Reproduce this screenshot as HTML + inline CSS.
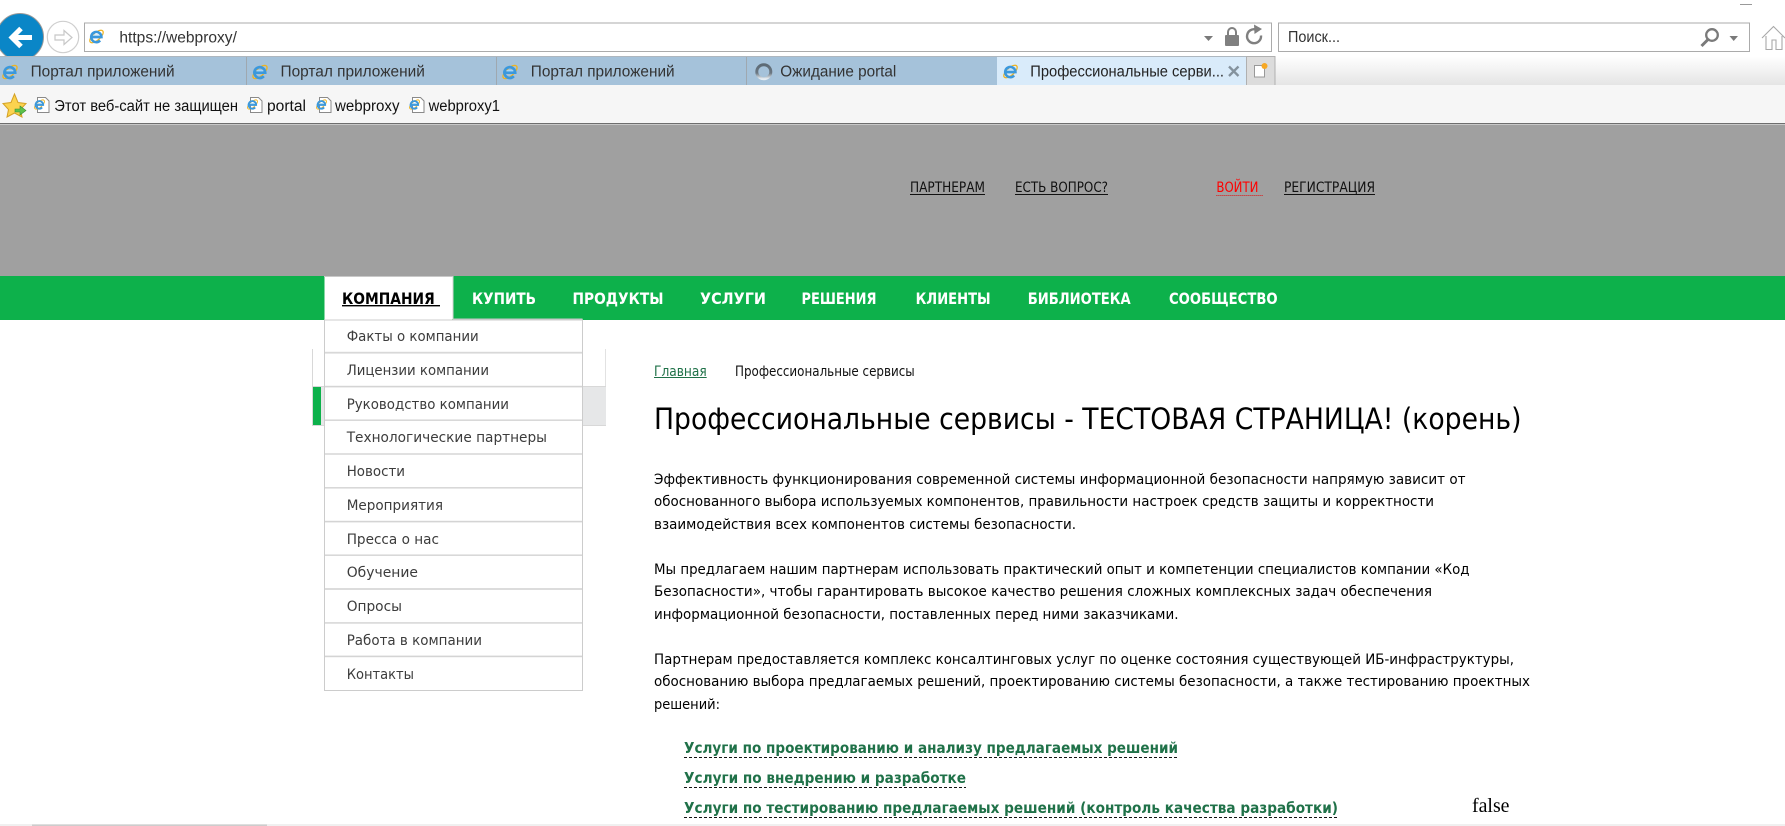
<!DOCTYPE html>
<html lang="ru"><head><meta charset="utf-8"><title>Профессиональные сервисы</title>
<style>
html,body{margin:0;padding:0;width:1785px;height:826px;overflow:hidden;background:#fff}
svg{display:block}
.c{font-family:"Liberation Sans",sans-serif;font-size:15.5px;fill:#333}
.t{font-family:"DejaVu Sans",sans-serif}
.b{font-size:14px;fill:#000}
.d{font-size:14px;fill:#3c3c3c}
.n{font-size:16px;font-weight:bold;fill:#fff}
.tl{font-size:14px;fill:#111}
.l{font-size:15px;font-weight:bold;fill:#1f7148}
</style></head><body>
<svg xmlns="http://www.w3.org/2000/svg" width="1785" height="826" viewBox="0 0 1785 826">
<defs>
<symbol id="ie" viewBox="-2 -2 20 20">
<ellipse cx="8" cy="8" rx="8.8" ry="3.9" transform="rotate(-42 8 8)" fill="none" stroke="#efb31e" stroke-width="1.3"/>
<path d="M2.6 8.6H13.2A5.4 5.4 0 1 0 11.8 12.2" fill="none" stroke="#3b98dc" stroke-width="2.7"/>
<rect x="4.6" y="6" width="6.6" height="1.4" fill="#a8d6f4"/>
</symbol>
<symbol id="pg" viewBox="0 0 16 16" overflow="visible">
<path d="M3.5 .5H11.5L15 4V15.5H3.5Z" fill="#fff" stroke="#8a8a8a"/>
<use href="#ie" x="-1.5" y="0.5" width="14" height="14"/>
</symbol>
<clipPath id="cb"><rect x="0" y="0" width="60" height="56.5"/></clipPath>
<linearGradient id="gr" x1="0" y1="0" x2="0" y2="1"><stop offset="0" stop-color="#fff"/><stop offset="1" stop-color="#e4e4e4"/></linearGradient>
<linearGradient id="sp" x1="0" y1="0" x2="0" y2="1"><stop offset="0" stop-color="#5d6a75"/><stop offset=".6" stop-color="#6b7782"/><stop offset="1" stop-color="#e6edf3"/></linearGradient>
</defs>

<!-- top chrome -->
<rect x="0" y="0" width="1785" height="57" fill="#fff"/>
<rect x="1740" y="4" width="12" height="1" fill="#999"/>
<g clip-path="url(#cb)"><circle cx="20" cy="37" r="23.5" fill="#0a86c7" stroke="#999" stroke-width="1"/></g>
<path d="M32 37.5H13M21 28.5L12 37.5L21 46.5" fill="none" stroke="#fff" stroke-width="5"/>
<circle cx="63" cy="37" r="15.7" fill="#fff" stroke="#cfcfcf" stroke-width="1.2"/>
<path d="M55 35H64V30.5L72 37.5L64 44.5V40H55Z" fill="#fff" stroke="#c8c8c8" stroke-width="1.2"/>
<rect x="84.5" y="23" width="1187" height="28.5" fill="#fff" stroke="#ababab"/>
<use href="#ie" x="87" y="27" width="19" height="19"/>
<text class="c" x="119.4" y="42.3" textLength="117.5" lengthAdjust="spacingAndGlyphs">https://webproxy/</text>
<path d="M1204 36H1213L1208.5 41Z" fill="#7a7a7a"/>
<path d="M1228 35V32A4 4 0 0 1 1236 32V35" fill="none" stroke="#808080" stroke-width="2"/>
<rect x="1225" y="35" width="14" height="11" rx="1" fill="#808080"/>
<path d="M1261 35.5A7 7 0 1 1 1256 29.5" fill="none" stroke="#808080" stroke-width="2.4"/>
<path d="M1254 24.5L1262 29L1254.5 34Z" fill="#808080"/>
<rect x="1278.5" y="23" width="471" height="28.5" fill="#fff" stroke="#ababab"/>
<text class="c" x="1288" y="42" textLength="52" lengthAdjust="spacingAndGlyphs">Поиск...</text>
<circle cx="1712" cy="35" r="5.8" fill="none" stroke="#7a7a7a" stroke-width="2.3"/>
<path d="M1708 39.5L1701.5 46" stroke="#7a7a7a" stroke-width="3"/>
<path d="M1729.5 36H1738L1733.7 41Z" fill="#7a7a7a"/>
<path d="M1762 38L1773.5 26.5L1785 38M1766 36V49.5H1772V40H1776V49.5H1782V36" fill="none" stroke="#a8a8a8" stroke-width="1.1"/>

<!-- tabs -->
<rect x="0" y="56.5" width="1785" height="29" fill="url(#gr)"/>
<rect x="0" y="56.5" width="997" height="28.5" fill="#a5c2da"/>
<rect x="0" y="56" width="1275" height="1" fill="#aeb7bf"/>
<rect x="246" y="57" width="1" height="28" fill="#9fa8b0"/>
<rect x="496" y="57" width="1" height="28" fill="#9fa8b0"/>
<rect x="746" y="57" width="1" height="28" fill="#9fa8b0"/>
<rect x="997" y="57" width="249" height="28" fill="#d9ebfa"/>
<rect x="1246.5" y="56.5" width="28.5" height="29" fill="#dcdcdc" stroke="#b0b0b0"/>
<use href="#ie" x="0" y="62" width="20" height="20"/>
<use href="#ie" x="250" y="62" width="20" height="20"/>
<use href="#ie" x="500" y="62" width="20" height="20"/>
<use href="#ie" x="1001" y="62" width="19" height="19"/>
<text class="c" x="30.6" y="76.7" textLength="144" lengthAdjust="spacingAndGlyphs">Портал приложений</text>
<text class="c" x="280.5" y="76.7" textLength="144.3" lengthAdjust="spacingAndGlyphs">Портал приложений</text>
<text class="c" x="530.8" y="76.7" textLength="143.8" lengthAdjust="spacingAndGlyphs">Портал приложений</text>
<circle cx="763.8" cy="71.7" r="7" fill="#a5c2da" stroke="url(#sp)" stroke-width="3"/>
<text class="c" x="780.3" y="76.7" textLength="116" lengthAdjust="spacingAndGlyphs">Ожидание portal</text>
<text class="c" x="1030.3" y="76.7" textLength="193.7" lengthAdjust="spacingAndGlyphs" style="fill:#222">Профессиональные серви...</text>
<path d="M1229 66.5L1238.5 76M1238.5 66.5L1229 76" stroke="#84929d" stroke-width="2.3"/>
<path d="M1254.5 65.5H1264.5V77H1254.5Z" fill="#fff" stroke="#999"/>
<circle cx="1264.5" cy="66" r="3" fill="#f7a823"/>

<!-- favorites -->
<rect x="0" y="85" width="1785" height="38" fill="#f6f6f6"/>
<path d="M14.5 94L18 102.5L26 103.5L20.5 109.5L22 117L14.5 113L7 117L8.5 109.5L3 103.5L11 102.5Z" fill="#fbd34f" stroke="#d4a125" stroke-width="1"/>
<path d="M15 109H20V106L26 110.5L20 115V112H15Z" fill="#5cc24a" stroke="#3b8c34" stroke-width=".6"/>
<use href="#pg" x="34" y="97" width="16" height="16"/>
<text class="c" x="54.3" y="111" textLength="183.7" lengthAdjust="spacingAndGlyphs" style="fill:#111">Этот веб-сайт не защищен</text>
<use href="#pg" x="247" y="97" width="16" height="16"/>
<text class="c" x="267" y="111" textLength="39" lengthAdjust="spacingAndGlyphs" style="fill:#111">portal</text>
<use href="#pg" x="316" y="97" width="16" height="16"/>
<text class="c" x="335" y="111" textLength="64.5" lengthAdjust="spacingAndGlyphs" style="fill:#111">webproxy</text>
<use href="#pg" x="409" y="97" width="16" height="16"/>
<text class="c" x="428.6" y="111" textLength="71.4" lengthAdjust="spacingAndGlyphs" style="fill:#111">webproxy1</text>
<rect x="0" y="123" width="1785" height="1" fill="#6e6e6e"/>
<rect x="0" y="124" width="1785" height="1" fill="#c8c8c8"/>

<!-- site header -->
<rect x="0" y="125" width="1785" height="151" fill="#a0a0a0"/>
<g class="t tl">
<text x="910" y="192" textLength="75" lengthAdjust="spacingAndGlyphs">ПАРТНЕРАМ</text>
<rect x="910" y="194" width="75" height="1" fill="#111"/>
<text x="1015" y="192" textLength="93" lengthAdjust="spacingAndGlyphs">ЕСТЬ ВОПРОС?</text>
<rect x="1015" y="194" width="93" height="1" fill="#111"/>
<text x="1216.4" y="192" textLength="42" lengthAdjust="spacingAndGlyphs" style="fill:#f00">ВОЙТИ</text>
<path d="M1216.4 195.5H1263" stroke="#e01010" stroke-width="1" stroke-dasharray="1 1"/>
<text x="1284" y="192" textLength="91" lengthAdjust="spacingAndGlyphs">РЕГИСТРАЦИЯ</text>
<rect x="1284" y="194" width="91" height="1" fill="#111"/>
</g>

<!-- nav -->
<rect x="0" y="276" width="1785" height="44" fill="#0db14b"/>
<rect x="324.5" y="276" width="128" height="44" fill="#fff"/>
<rect x="324" y="276" width="129" height="1" fill="#c8c8c8"/>
<rect x="452.5" y="276" width="1" height="43" fill="#d4d4d4"/>
<g class="t n">
<text x="342" y="304" textLength="92.7" lengthAdjust="spacingAndGlyphs" style="fill:#000">КОМПАНИЯ</text>
<rect x="342" y="305" width="98" height="1.4" fill="#000"/>
<text x="472" y="304" textLength="64" lengthAdjust="spacingAndGlyphs">КУПИТЬ</text>
<text x="572.5" y="304" textLength="91" lengthAdjust="spacingAndGlyphs">ПРОДУКТЫ</text>
<text x="700" y="304" textLength="66" lengthAdjust="spacingAndGlyphs">УСЛУГИ</text>
<text x="801.5" y="304" textLength="75" lengthAdjust="spacingAndGlyphs">РЕШЕНИЯ</text>
<text x="915.6" y="304" textLength="75" lengthAdjust="spacingAndGlyphs">КЛИЕНТЫ</text>
<text x="1027.7" y="304" textLength="103" lengthAdjust="spacingAndGlyphs">БИБЛИОТЕКА</text>
<text x="1169" y="304" textLength="108.6" lengthAdjust="spacingAndGlyphs">СООБЩЕСТВО</text>
</g>

<!-- left panel behind dropdown -->
<rect x="312" y="349" width="1" height="77" fill="#d8d8d8"/>
<rect x="605" y="349" width="1" height="38" fill="#e2e2e2"/>
<rect x="312" y="386" width="294" height="1" fill="#d8d8d8"/>
<rect x="313" y="387" width="293" height="38" fill="#e6e7e8"/>
<rect x="313" y="387" width="8" height="38" fill="#0db14b"/>
<rect x="312" y="425" width="294" height="1" fill="#d8d8d8"/>

<!-- dropdown -->
<rect x="453" y="318.5" width="129.5" height="1.2" fill="#c8c8c8"/>
<rect x="324.5" y="320" width="258" height="370.5" fill="#fff" stroke="#cccccc"/>
<rect x="325" y="351.8" width="257" height="1.8" fill="#d8d8d8"/>
<rect x="325" y="385.8" width="257" height="1.6" fill="#d4d4d4"/>
<rect x="325" y="419.4" width="257" height="1.6" fill="#d8d8d8"/>
<rect x="325" y="453.2" width="257" height="1.6" fill="#d8d8d8"/>
<rect x="325" y="487" width="257" height="1.6" fill="#d8d8d8"/>
<rect x="325" y="520.8" width="257" height="1.6" fill="#d4d4d4"/>
<rect x="325" y="554.4" width="257" height="1.6" fill="#d8d8d8"/>
<rect x="325" y="588" width="257" height="2" fill="#dcdcdc"/>
<rect x="325" y="622" width="257" height="1.8" fill="#dcdcdc"/>
<rect x="325" y="655.6" width="257" height="1.6" fill="#d4d4d4"/>
<g class="t d">
<text x="346.7" y="341" textLength="132" lengthAdjust="spacingAndGlyphs">Факты о компании</text>
<text x="346.7" y="375" textLength="142.3" lengthAdjust="spacingAndGlyphs">Лицензии компании</text>
<text x="346.7" y="409" textLength="162.3" lengthAdjust="spacingAndGlyphs">Руководство компании</text>
<text x="346.7" y="442" textLength="200.3" lengthAdjust="spacingAndGlyphs">Технологические партнеры</text>
<text x="346.7" y="476" textLength="58.3" lengthAdjust="spacingAndGlyphs">Новости</text>
<text x="346.7" y="510" textLength="96.3" lengthAdjust="spacingAndGlyphs">Мероприятия</text>
<text x="346.7" y="544" textLength="92.3" lengthAdjust="spacingAndGlyphs">Пресса о нас</text>
<text x="346.7" y="577" textLength="71.3" lengthAdjust="spacingAndGlyphs">Обучение</text>
<text x="346.7" y="611" textLength="55.3" lengthAdjust="spacingAndGlyphs">Опросы</text>
<text x="346.7" y="645" textLength="135.3" lengthAdjust="spacingAndGlyphs">Работа в компании</text>
<text x="346.7" y="679" textLength="67.3" lengthAdjust="spacingAndGlyphs">Контакты</text>
</g>

<!-- content -->
<g class="t">
<text x="654" y="376" font-size="14" fill="#1f7148" textLength="52.7" lengthAdjust="spacingAndGlyphs">Главная</text>
<rect x="654" y="377" width="52.7" height="1" fill="#1f7148"/>
<text x="735" y="376" font-size="14" fill="#111" textLength="179.7" lengthAdjust="spacingAndGlyphs">Профессиональные сервисы</text>
<text x="654" y="429" font-size="29.5" fill="#000" textLength="867.5" lengthAdjust="spacingAndGlyphs">Профессиональные сервисы - ТЕСТОВАЯ СТРАНИЦА! (корень)</text>
</g>
<g class="t b">
<text x="654" y="484" textLength="811.5" lengthAdjust="spacingAndGlyphs">Эффективность функционирования современной системы информационной безопасности напрямую зависит от</text>
<text x="654" y="506" textLength="780" lengthAdjust="spacingAndGlyphs">обоснованного выбора используемых компонентов, правильности настроек средств защиты и корректности</text>
<text x="654" y="529" textLength="422" lengthAdjust="spacingAndGlyphs">взаимодействия всех компонентов системы безопасности.</text>
<text x="654" y="574" textLength="815.5" lengthAdjust="spacingAndGlyphs">Мы предлагаем нашим партнерам использовать практический опыт и компетенции специалистов компании «Код</text>
<text x="654" y="596" textLength="778" lengthAdjust="spacingAndGlyphs">Безопасности», чтобы гарантировать высокое качество решения сложных комплексных задач обеспечения</text>
<text x="654" y="619" textLength="524.5" lengthAdjust="spacingAndGlyphs">информационной безопасности, поставленных перед ними заказчиками.</text>
<text x="654" y="664" textLength="860" lengthAdjust="spacingAndGlyphs">Партнерам предоставляется комплекс консалтинговых услуг по оценке состояния существующей ИБ-инфраструктуры,</text>
<text x="654" y="686" textLength="876" lengthAdjust="spacingAndGlyphs">обоснованию выбора предлагаемых решений, проектированию системы безопасности, а также тестированию проектных</text>
<text x="654" y="709" textLength="66" lengthAdjust="spacingAndGlyphs">решений:</text>
</g>
<g class="t l">
<text x="684" y="753" textLength="494" lengthAdjust="spacingAndGlyphs">Услуги по проектированию и анализу предлагаемых решений</text>
<text x="684" y="783" textLength="282" lengthAdjust="spacingAndGlyphs">Услуги по внедрению и разработке</text>
<text x="684" y="813" textLength="654" lengthAdjust="spacingAndGlyphs">Услуги по тестированию предлагаемых решений (контроль качества разработки)</text>
</g>
<path d="M684 757.5H1178M684 787.5H966M684 817.5H1338" stroke="#111" stroke-width="1" stroke-dasharray="3 2"/>
<text x="1472" y="812" font-family="Liberation Serif,serif" font-size="20" fill="#000" textLength="37.5" lengthAdjust="spacingAndGlyphs">false</text>

<!-- scrollbar -->
<rect x="0" y="824" width="1785" height="2" fill="#f0f0f0"/>
<rect x="32" y="824.5" width="235" height="1.5" fill="#cdcdcd"/>
</svg>
</body></html>
